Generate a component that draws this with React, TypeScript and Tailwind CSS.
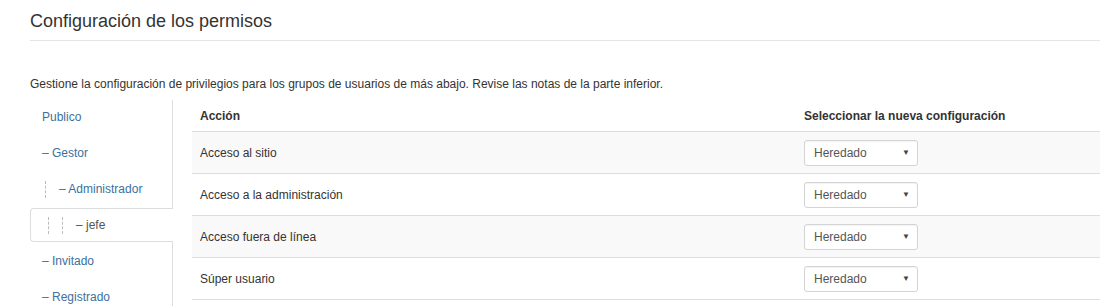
import React from 'react';

const groups = [
  { name: 'Publico', level: 0 },
  { name: '– Gestor', level: 1 },
  { name: '– Administrador', level: 2 },
  { name: '– jefe', level: 3, active: true },
  { name: '– Invitado', level: 1 },
  { name: '– Registrado', level: 1 },
];

const actions = [
  'Acceso al sitio',
  'Acceso a la administración',
  'Acceso fuera de línea',
  'Súper usuario',
];

function Select() {
  return (
    <div className="flex h-[26px] w-[114px] items-center justify-between rounded-[3px] border border-[#d4d4d4] bg-white pl-[9px] pr-[7px] text-[12px] text-[#555] shadow-[inset_0_1px_1px_rgba(0,0,0,0.05)]">
      <span>Heredado</span>
      <span className="text-[8px] text-[#444]">▼</span>
    </div>
  );
}

function Dots({ count }: { count: number }) {
  return (
    <>
      {Array.from({ length: count }).map((_, i) => (
        <span key={i} className="mr-[13px] inline-block h-[17px] border-l border-dashed border-[#bbb]" />
      ))}
    </>
  );
}

export default function App() {
  return (
    <div className="h-[306px] w-[1100px] overflow-hidden bg-white pl-[30px] font-['Liberation_Sans',Arial,sans-serif] text-[#333]">
      <h2 className="border-b border-[#e5e5e5] pt-[11px] pb-[9px] text-[18px] leading-[20px]">
        Configuración de los permisos
      </h2>
      <p className="mt-[36px] text-[12px] leading-[14px]">
        Gestione la configuración de privilegios para los grupos de usuarios de más abajo. Revise las notas de la parte inferior.
      </p>
      <div className="mt-[9px] flex">
        <ul className="w-[143px] shrink-0 border-r border-[#ddd] text-[12px]">
          {groups.map((g) => (
            <li
              key={g.name}
              className={
                g.active
                  ? 'relative -mr-px mb-[2px] flex h-[34px] items-center rounded-l-[4px] border border-r-0 border-[#ddd] bg-white pl-[14px] text-[#555]'
                  : 'mb-[2px] flex h-[34px] items-center pl-[12px] text-[#406f9d]'
              }
            >
              {g.level >= 2 && <span className="ml-[3px] flex items-center"><Dots count={g.level - 1} /></span>}
              <span>{g.name}</span>
            </li>
          ))}
        </ul>
        <div className="ml-[19px] flex-1">
          <div className="flex h-[32px] items-center border-b border-[#ddd] text-[12px] font-bold">
            <div className="w-[604px] pl-[8px]">Acción</div>
            <div className="pl-[8px]">Seleccionar la nueva configuración</div>
          </div>
          {actions.map((a, i) => (
            <div
              key={a}
              className={`flex h-[42px] items-center border-b border-[#ddd] text-[12px] ${i % 2 === 0 ? 'bg-[#f9f9f9]' : 'bg-white'}`}
            >
              <div className="w-[604px] pl-[8px]">{a}</div>
              <div className="pl-[8px]">
                <Select />
              </div>
            </div>
          ))}
        </div>
      </div>
    </div>
  );
}
